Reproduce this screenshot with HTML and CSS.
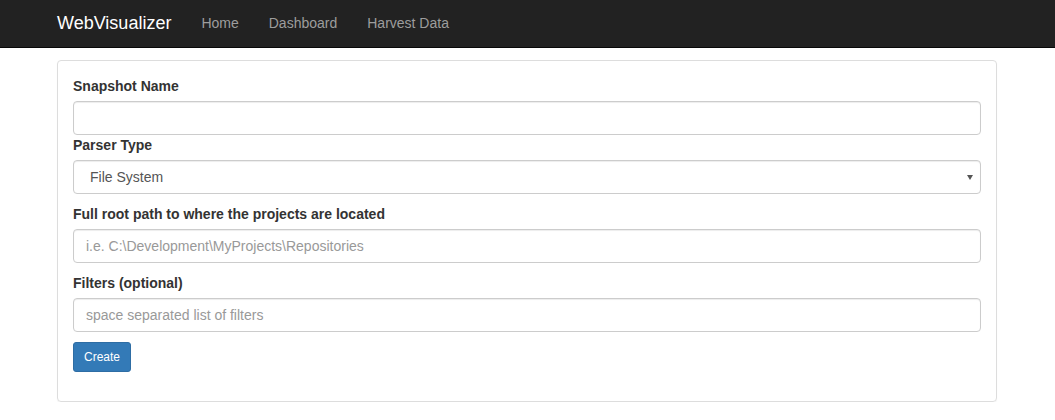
FILE: index.html
```html
<!DOCTYPE html>
<html>
<head>
<meta charset="utf-8">
<title>WebVisualizer</title>
<link rel="stylesheet" href="styles.css">
</head>
<body>
<nav class="navbar">
  <div class="container navbar-inner">
    <a class="brand" href="#">WebVisualizer</a>
    <ul class="nav">
      <li><a href="#">Home</a></li>
      <li><a href="#">Dashboard</a></li>
      <li><a href="#">Harvest Data</a></li>
    </ul>
  </div>
</nav>
<main class="container">
  <div class="panel">
    <form class="form">
      <label class="label">Snapshot Name</label>
      <input class="control first" type="text">
      <label class="label">Parser Type</label>
      <div class="select-wrap">
        <select class="control select">
          <option>File System</option>
        </select>
      </div>
      <label class="label">Full root path to where the projects are located</label>
      <input class="control spaced" type="text" placeholder="i.e. C:\Development\MyProjects\Repositories">
      <label class="label">Filters (optional)</label>
      <input class="control spaced" type="text" placeholder="space separated list of filters">
      <div class="actions">
        <button class="btn" type="button">Create</button>
      </div>
    </form>
  </div>
</main>
</body>
</html>
```

FILE: styles.css
```css
* { box-sizing: border-box; }
html, body {
  margin: 0;
  padding: 0;
  background: #fff;
  font-family: "Liberation Sans", Arial, Helvetica, sans-serif;
  font-size: 14px;
  line-height: 20px;
  color: #333;
}
.container {
  width: 971px;
  margin: 0 auto;
  padding: 0 16px 0 15px;
}
.navbar {
  background: #222;
  border-bottom: 1px solid #080808;
  height: 48px;
}
.navbar-inner {
  display: flex;
  align-items: flex-start;
  height: 47px;
  padding-top: 13px;
}
.brand {
  font-size: 18px;
  line-height: 20px;
  color: #fff;
  text-decoration: none;
  padding-right: 15px;
}
.nav {
  display: flex;
  list-style: none;
  margin: 0;
  padding: 0;
}
.nav a {
  display: block;
  padding: 0 15px;
  color: #9d9d9d;
  text-decoration: none;
  line-height: 20px;
}
.panel {
  margin-top: 12px;
  border: 1px solid #ddd;
  border-radius: 4px;
  box-shadow: 0 1px 1px rgba(0,0,0,.05);
  padding: 15px;
}
.form {
  display: flex;
  flex-direction: column;
  align-items: flex-start;
}
.label {
  font-weight: bold;
  margin-bottom: 5px;
  line-height: 20px;
}
.control {
  display: block;
  width: 100%;
  height: 34px;
  padding: 6px 12px;
  font-family: inherit;
  font-size: 14px;
  line-height: 20px;
  color: #555;
  background: #fff;
  border: 1px solid #ccc;
  border-radius: 4px;
  box-shadow: inset 0 1px 1px rgba(0,0,0,.075);
  outline: none;
}
.control::placeholder { color: #999; }
.first { margin-bottom: 0; }
.spaced { margin-bottom: 10px; }
.select-wrap {
  position: relative;
  width: 100%;
  margin-bottom: 10px;
}
.select {
  -webkit-appearance: none;
  appearance: none;
  padding-left: 16px;
}
.select-wrap::after {
  content: "";
  position: absolute;
  right: 8px;
  top: 15px;
  border-left: 3.5px solid transparent;
  border-right: 3.5px solid transparent;
  border-top: 5px solid #555;
}
.actions { margin-bottom: 14px; }
.btn {
  display: inline-block;
  padding: 5px 10px;
  font-family: inherit;
  font-size: 12px;
  line-height: 18px;
  color: #fff;
  background: #337ab7;
  border: 1px solid #2e6da4;
  border-radius: 3px;
  cursor: pointer;
}
```
